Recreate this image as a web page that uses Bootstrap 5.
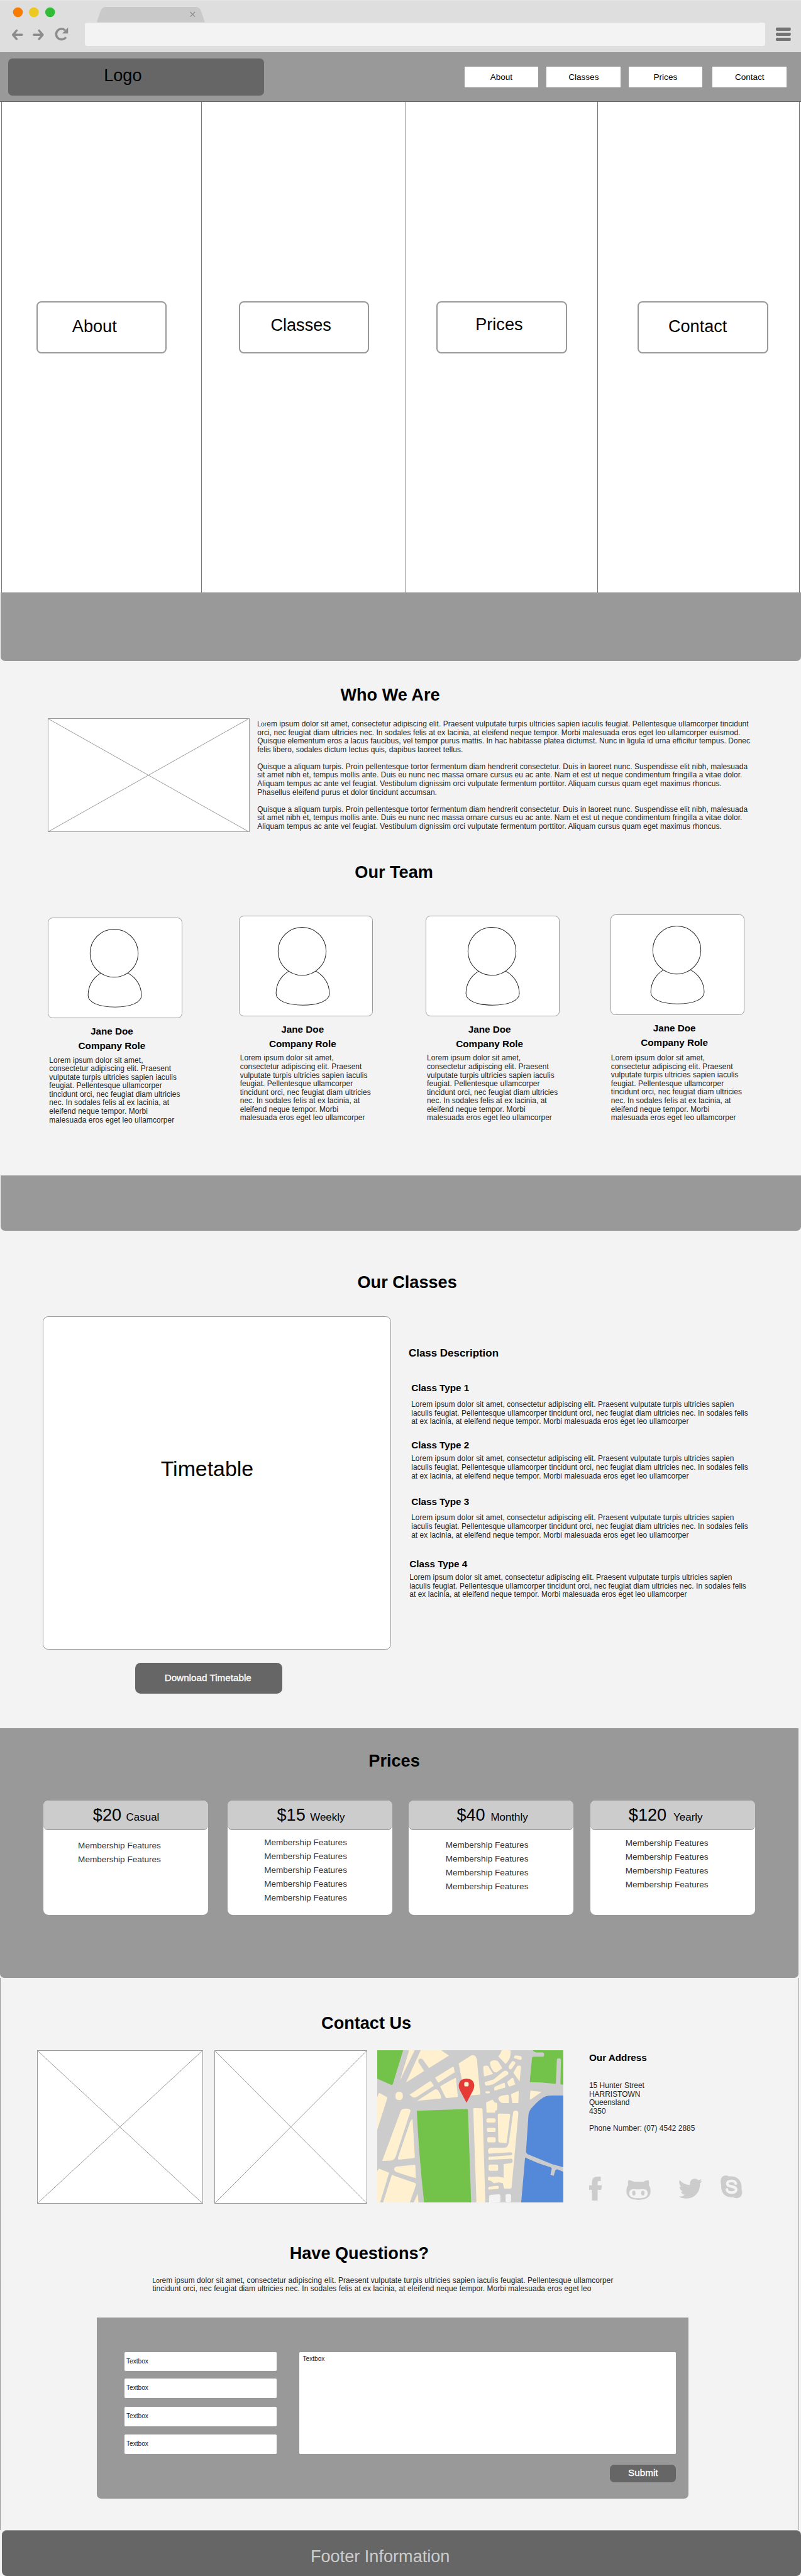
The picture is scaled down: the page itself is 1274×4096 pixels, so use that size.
<!DOCTYPE html>
<html lang="en">
<head>
<meta charset="utf-8">
<meta name="viewport" content="width=device-width, initial-scale=1">
<title>Fitness studio wireframe</title>
<link href="https://cdn.jsdelivr.net/npm/bootstrap@5.3.0/dist/css/bootstrap.min.css" rel="stylesheet">
<style>
/* 1rem = 10 design units */
html{font-size:8.473px}
body{font-family:"Liberation Sans",Arial,sans-serif;font-size:1.4rem;line-height:1.6rem;color:#222;background:#f3f3f3;overflow-x:hidden}
svg{display:block;flex:none}
.nw{white-space:nowrap}
.title{font-size:3.2rem;line-height:3.6rem;font-weight:700;color:#000;margin:0 0 -.13rem;padding-top:.13rem;white-space:nowrap}
.sub{font-size:1.8rem;line-height:2rem;font-weight:700;color:#000;margin:0;white-space:nowrap}
.lor{font-size:1.2rem}
.about-txt p,.bio,.ask{letter-spacing:.0125rem}
/* browser bar */
.chrome{height:9.8rem;background:#dedede;border-top:1px solid #e6e6e6}
.chrome-top{height:4.1rem}
.dots{margin:1.2rem 0 0 2.4rem}
.tabshape{margin:1.2rem 0 0 7.6rem;width:20.5rem;height:2.9rem}
.arrows{margin:.9rem 0 0 2.1rem;width:10.9rem}
.address{margin-left:2.9rem;width:127.7rem;height:4.4rem;background:#f3f3f3;border-radius:.4rem}
.burger{margin:.8rem 0 0 2.1rem}
/* navigation */
.mainnav{height:9.3rem;background:#999;border-bottom:1px solid #666;padding:1.2rem 2.7rem 0 1.5rem}
.logo{width:48.1rem;height:7rem;border-radius:.8rem;background:#666;font-size:3.2rem;line-height:3.6rem;color:#000;padding:1.45rem 0 0 18rem}
.menu{margin-top:1.5rem}
.menu a{width:13.9rem;height:3.9rem;background:#fff;border-bottom:1px solid #ddd;color:#000;font-size:1.6rem;line-height:4rem;text-align:center;text-decoration:none;padding:0}
.g1{margin-left:1.55rem}.g2{margin-left:1.45rem}.g3{margin-left:1.9rem}
/* hero */
.hero{height:92.1rem;background:#fff;padding-left:.2rem}
.panel{border-left:1px solid #777;padding-top:37.4rem;height:100%;flex:none}
.p1{width:37.6rem;padding-left:6.5rem}.p2{width:38.3rem;padding-left:6.9rem}.p3{width:36rem;padding-left:5.7rem}.p4{width:38rem;padding-left:7.5rem;border-right:1px solid #777}
.bigbtn{width:24.5rem;height:9.8rem;border:.3rem solid #999;border-radius:.9rem;background:#fff;color:#000;font-size:3.2rem;line-height:3.6rem}
.p1 .bigbtn{padding:2.7rem 0 0 6.5rem}.p2 .bigbtn{padding:2.5rem 0 0 5.75rem}.p3 .bigbtn{padding:2.4rem 0 0 7.1rem}.p4 .bigbtn{padding:2.7rem 0 0 5.5rem}
.band{background:#999;border-radius:0 0 .8rem .8rem;margin-left:.15rem}
.band-a{height:12.8rem}.band-b{height:10.4rem}
/* about */
.about{height:96.6rem;padding-top:4.46rem}
.t-who{padding-left:63.9rem}
.about-row{height:21.4rem;margin:2.74rem 0 0 9rem}
.ph{border:1px solid #999;background:#fff}
.ph svg{width:100%;height:100%}
.ph-a{width:37.8rem;height:21.4rem}
.about-txt{padding:.35rem 0 0 1.5rem}
.about-txt p{margin:0 0 1.6rem}
.t-team{padding-left:66.6rem;margin-top:5.66rem}
.team{margin-top:6.2rem}
.member{width:25.2rem;flex:none}
.m1{margin:.54rem 0 0 9rem}.m2{margin:.17rem 0 0 10.6rem}.m3{margin:.17rem 0 0 9.9rem}.m4{margin-left:9.5rem}
.avatar{height:18.88rem;border:1px solid #999;border-radius:.9rem;background:#fff;overflow:hidden}
.who{font-size:1.8rem;line-height:2.7rem;font-weight:700;color:#000;text-align:center;margin:1.16rem 1.2rem 0 0}
.bio{margin:.6rem 0 0 .25rem;white-space:nowrap}
.m4 .bio{margin:.74rem 0 0 .1rem}
/* classes */
.classes{height:93.3rem;padding-top:7.79rem}
.t-classes{padding-left:67.1rem}
.classes-row{margin:4.58rem 0 0 8.06rem}
.timetable{width:65.35rem;height:62.55rem;background:#fff;border:1px solid #999;border-radius:1rem;font-size:4rem;line-height:4.6rem;color:#000;padding:26.2rem 0 0 22rem}
.dark{background:#666;color:#fff;font-size:1.8rem;line-height:2rem;border:0;border-radius:1rem;padding:0;-webkit-text-stroke:.3px #fff}
.download{margin:2.5rem 0 0 17.35rem;width:27.55rem;height:5.8rem;padding-right:.3rem}
.desc{padding:5.86rem 0 0 3.3rem}
.desc h3{font-size:2rem;line-height:2.4rem;font-weight:700;color:#000;margin:0}
.desc p{margin:0;white-space:nowrap;letter-spacing:.01rem}
.c1,.c2,.c3{padding-left:.5rem}.c4{padding-left:.15rem}
.c1{margin-top:4.25rem}.c2{margin-top:2.69rem}.c3{margin-top:3rem}.c4{margin-top:3.66rem}
.c1 p{margin-top:1.36rem}.c2 p{margin-top:.71rem}.c3 p{margin-top:1.3rem}.c4 p{margin-top:.74rem}
/* prices */
.prices{height:46.9rem;width:149.85rem;background:#999;border-radius:0 0 .8rem .8rem;padding-top:4.29rem}
.t-prices{padding-left:69.2rem}
.plans{margin:5.7rem 0 0 8.15rem}
.plan{height:21.5rem;width:30.9rem;background:#fff;border-radius:1rem;flex:none}
.plan-head{height:5.57rem;background:#ccc;border-bottom:1px solid #888;border-radius:.9rem;color:#000;padding-top:.93rem;font-size:3.2rem;line-height:3.6rem;white-space:nowrap}
.plan-head span{font-size:2rem}
.feat{font-size:1.6rem;line-height:2.6rem;color:#333;margin:0}
.k1 .plan-head{padding-left:9.3rem}.k2 .plan-head{padding-left:9.3rem}.k3 .plan-head{padding-left:9rem}.k4 .plan-head{padding-left:7.2rem}
.k1 .feat{padding:1.6rem 0 0 6.5rem}.k2 .feat{padding:1rem 0 0 6.9rem}.k3 .feat{padding:1.5rem 0 0 6.9rem}.k4 .feat{padding:1.2rem 0 0 6.6rem}
.k2{margin-left:3.64rem}.k3{margin-left:3.15rem}.k4{margin-left:3.17rem}
.k3 .plan-head span{margin-left:.15rem}.k4 .plan-head span{margin-left:.4rem}
/* contact */
.contact{height:103.6rem;width:150rem;border:solid #999;border-width:0 1px;padding-top:6.56rem}
.t-contact{padding-left:60.2rem}
.contact-row{height:28.8rem;margin:3.44rem 0 0 6.9rem}
.ph-b{width:31.1rem;height:28.8rem}.ph-c{width:28.7rem;height:28.8rem;margin-left:2.1rem}
.map{width:34.92rem;height:28.57rem;margin-left:1.95rem}
.addr{padding:.4rem 0 0 4.8rem}
.addr p{margin:3.47rem 0 0;white-space:nowrap;letter-spacing:.007rem}
.social{margin-top:8rem}
.i-fb{width:2.4rem;height:4.55rem;margin-top:.2rem}.i-gh{width:4.6rem;height:3.8rem;margin:.8rem 0 0 4.6rem}.i-tw{width:4.5rem;height:3.8rem;margin:.6rem 0 0 5.2rem}.i-sk{width:4.1rem;height:4.3rem;margin-left:3.4rem}
.t-ask{padding-left:54.25rem;margin-top:7.37rem}
.ask{margin:2.64rem 0 0 28.5rem;white-space:nowrap}
.askform{margin:4.49rem 0 0 18rem;width:111.1rem;height:34rem;background:#999;border-radius:0 0 .8rem .8rem;padding:6.5rem 2.3rem 0 5.3rem}
.tb{width:28.5rem;height:3.6rem;border:0;border-radius:.2rem;background:#fff;font-size:1.2rem;line-height:3.6rem;color:#222;padding:0 0 0 .3rem}
.tb2{margin-top:1.4rem}.tb3{margin-top:1.7rem}.tb4{margin-top:1.6rem}
.ta{width:70.7rem;height:19.1rem;line-height:1.4rem;padding:.58rem 0 0 .6rem}
.submit{width:12.4rem;height:3.4rem;margin-top:2rem;padding-bottom:.2rem;border-radius:.8rem}
/* footer */
.foot{height:8.6rem;margin-left:.3rem;background:#666;border-top:1px solid #999;border-radius:.9rem;color:#ccc;font-size:3.2rem;line-height:3.6rem;padding:3.1rem 0 0 58rem}
</style>
<script src="https://cdn.jsdelivr.net/npm/bootstrap@5.3.0/dist/js/bootstrap.bundle.min.js"></script>
</head>
<body>
<svg width="0" height="0" class="position-absolute">
  <symbol id="person" viewBox="0 0 252 189">
    <g fill="#fff" stroke="#222" stroke-width="1.2">
      <path d="M99 104.5C83 114 75 130 75 147C75 160 95 169 126 169C157 169 176.500 160 176.500 147C176.500 130 168 114 151 104.500Z"/>
      <circle cx="124.500" cy="66.500" r="45.700"/>
    </g>
  </symbol>
  <symbol id="cross" viewBox="0 0 100 100" preserveAspectRatio="none">
    <path d="M0 0L100 100M100 0L0 100" stroke="#999" fill="none" vector-effect="non-scaling-stroke"/>
  </symbol>
</svg>

<header>
  <div class="chrome">
    <div class="chrome-top d-flex">
      <svg class="dots" style="width:8.1rem;height:2rem" viewBox="0 0 81 20"><circle cx="10" cy="10" r="9.200" fill="#f97c00"/><circle cx="40" cy="10" r="9.200" fill="#ecc822"/><circle cx="70.500" cy="10" r="9.200" fill="#33bc38"/></svg>
      <svg class="tabshape" viewBox="0 0 205 29"><path d="M1 29L8 8Q11 0 18 0H187Q194 0 197 8L204 29Z" fill="#c9c9c9"/><path d="M176.500 9.500L185.500 18.500M185.500 9.500L176.500 18.500" stroke="#8c8c8c" stroke-width="1.500"/></svg>
    </div>
    <div class="d-flex">
      <svg class="arrows" style="height:2.700rem" viewBox="0 0 109 27"><g fill="none" stroke="#8c8c8c" stroke-width="4" stroke-linecap="round" stroke-linejoin="round"><path d="M20 14.500H3M10 6.500L3 14.500L10 22.500M42 14.500H59M52 6.500L59 14.500L52 22.500"/><path d="M102.500 19A10 10 0 1 1 101 6" stroke-linecap="butt"/></g><path d="M106.500 1V12H95.500Z" fill="#8c8c8c"/></svg>
      <div class="address"></div>
      <svg class="burger" style="width:2.800rem;height:2.700rem" viewBox="0 0 28 27"><g fill="#737373"><rect y="1" width="28" height="6" rx="2"/><rect y="10.500" width="28" height="6" rx="2"/><rect y="20" width="28" height="6" rx="2"/></g></svg>
    </div>
  </div>
  <nav class="mainnav d-flex justify-content-between align-items-start">
    <div class="logo">Logo</div>
    <div class="menu d-flex"><a class="nav-link" href="#">About</a><a class="nav-link g1" href="#">Classes</a><a class="nav-link g2" href="#">Prices</a><a class="nav-link g3" href="#">Contact</a></div>
  </nav>
</header>

<section class="hero d-flex">
  <div class="panel p1"><div class="bigbtn">About</div></div>
  <div class="panel p2"><div class="bigbtn">Classes</div></div>
  <div class="panel p3"><div class="bigbtn">Prices</div></div>
  <div class="panel p4"><div class="bigbtn">Contact</div></div>
</section>
<div class="band band-a"></div>

<section class="about">
  <h2 class="title t-who">Who We Are</h2>
  <div class="about-row d-flex">
    <div class="ph ph-a"><svg><use href="#cross"/></svg></div>
    <div class="about-txt nw">
      <p><span class="lor">Lor</span>em ipsum dolor sit amet, consectetur adipiscing elit. Praesent vulputate turpis ultricies sapien iaculis feugiat. Pellentesque ullamcorper tincidunt<br>orci, nec feugiat diam ultricies nec. In sodales felis at ex lacinia, at eleifend neque tempor. Morbi malesuada eros eget leo ullamcorper euismod.<br>Quisque elementum eros a lacus faucibus, vel tempor purus mattis. In hac habitasse platea dictumst. Nunc in ligula id urna efficitur tempus. Donec<br>felis libero, sodales dictum lectus quis, dapibus laoreet tellus.</p>
      <p>Quisque a aliquam turpis. Proin pellentesque tortor fermentum diam hendrerit consectetur. Duis in laoreet nunc. Suspendisse elit nibh, malesuada<br>sit amet nibh et, tempus mollis ante. Duis eu nunc nec massa ornare cursus eu ac ante. Nam et est ut neque condimentum fringilla a vitae dolor.<br>Aliquam tempus ac ante vel feugiat. Vestibulum dignissim orci vulputate fermentum porttitor. Aliquam cursus quam eget maximus rhoncus.<br>Phasellus eleifend purus et dolor tincidunt accumsan.</p>
      <p>Quisque a aliquam turpis. Proin pellentesque tortor fermentum diam hendrerit consectetur. Duis in laoreet nunc. Suspendisse elit nibh, malesuada<br>sit amet nibh et, tempus mollis ante. Duis eu nunc nec massa ornare cursus eu ac ante. Nam et est ut neque condimentum fringilla a vitae dolor.<br>Aliquam tempus ac ante vel feugiat. Vestibulum dignissim orci vulputate fermentum porttitor. Aliquam cursus quam eget maximus rhoncus.</p>
    </div>
  </div>
  <h2 class="title t-team">Our Team</h2>
  <div class="team d-flex align-items-start">
    <div class="member m1">
      <div class="avatar"><svg class="w-100 h-100"><use href="#person"/></svg></div>
      <div class="who">Jane Doe<br>Company Role</div>
      <p class="bio">Lorem ipsum dolor sit amet,<br>consectetur adipiscing elit. Praesent<br>vulputate turpis ultricies sapien iaculis<br>feugiat. Pellentesque ullamcorper<br>tincidunt orci, nec feugiat diam ultricies<br>nec. In sodales felis at ex lacinia, at<br>eleifend neque tempor. Morbi<br>malesuada eros eget leo ullamcorper</p>
    </div>
    <div class="member m2">
      <div class="avatar"><svg class="w-100 h-100" viewBox="6 0 252 189"><use href="#person" width="252" height="189"/></svg></div>
      <div class="who">Jane Doe<br>Company Role</div>
      <p class="bio">Lorem ipsum dolor sit amet,<br>consectetur adipiscing elit. Praesent<br>vulputate turpis ultricies sapien iaculis<br>feugiat. Pellentesque ullamcorper<br>tincidunt orci, nec feugiat diam ultricies<br>nec. In sodales felis at ex lacinia, at<br>eleifend neque tempor. Morbi<br>malesuada eros eget leo ullamcorper</p>
    </div>
    <div class="member m3">
      <div class="avatar"><svg class="w-100 h-100"><use href="#person"/></svg></div>
      <div class="who">Jane Doe<br>Company Role</div>
      <p class="bio">Lorem ipsum dolor sit amet,<br>consectetur adipiscing elit. Praesent<br>vulputate turpis ultricies sapien iaculis<br>feugiat. Pellentesque ullamcorper<br>tincidunt orci, nec feugiat diam ultricies<br>nec. In sodales felis at ex lacinia, at<br>eleifend neque tempor. Morbi<br>malesuada eros eget leo ullamcorper</p>
    </div>
    <div class="member m4">
      <div class="avatar"><svg class="w-100 h-100"><use href="#person"/></svg></div>
      <div class="who">Jane Doe<br>Company Role</div>
      <p class="bio">Lorem ipsum dolor sit amet,<br>consectetur adipiscing elit. Praesent<br>vulputate turpis ultricies sapien iaculis<br>feugiat. Pellentesque ullamcorper<br>tincidunt orci, nec feugiat diam ultricies<br>nec. In sodales felis at ex lacinia, at<br>eleifend neque tempor. Morbi<br>malesuada eros eget leo ullamcorper</p>
    </div>
  </div>
</section>
<div class="band band-b"></div>

<section class="classes">
  <h2 class="title t-classes">Our Classes</h2>
  <div class="classes-row d-flex align-items-start">
    <div>
      <div class="timetable">Timetable</div>
      <button class="dark download d-block">Download Timetable</button>
    </div>
    <div class="desc">
      <h3>Class Description</h3>
      <div class="c1"><h4 class="sub">Class Type 1</h4><p>Lorem ipsum dolor sit amet, consectetur adipiscing elit. Praesent vulputate turpis ultricies sapien<br>iaculis feugiat. Pellentesque ullamcorper tincidunt orci, nec feugiat diam ultricies nec. In sodales felis<br>at ex lacinia, at eleifend neque tempor. Morbi malesuada eros eget leo ullamcorper</p></div>
      <div class="c2"><h4 class="sub">Class Type 2</h4><p>Lorem ipsum dolor sit amet, consectetur adipiscing elit. Praesent vulputate turpis ultricies sapien<br>iaculis feugiat. Pellentesque ullamcorper tincidunt orci, nec feugiat diam ultricies nec. In sodales felis<br>at ex lacinia, at eleifend neque tempor. Morbi malesuada eros eget leo ullamcorper</p></div>
      <div class="c3"><h4 class="sub">Class Type 3</h4><p>Lorem ipsum dolor sit amet, consectetur adipiscing elit. Praesent vulputate turpis ultricies sapien<br>iaculis feugiat. Pellentesque ullamcorper tincidunt orci, nec feugiat diam ultricies nec. In sodales felis<br>at ex lacinia, at eleifend neque tempor. Morbi malesuada eros eget leo ullamcorper</p></div>
      <div class="c4"><h4 class="sub">Class Type 4</h4><p>Lorem ipsum dolor sit amet, consectetur adipiscing elit. Praesent vulputate turpis ultricies sapien<br>iaculis feugiat. Pellentesque ullamcorper tincidunt orci, nec feugiat diam ultricies nec. In sodales felis<br>at ex lacinia, at eleifend neque tempor. Morbi malesuada eros eget leo ullamcorper</p></div>
    </div>
  </div>
</section>

<section class="prices">
  <h2 class="title t-prices">Prices</h2>
  <div class="plans d-flex">
    <div class="plan k1"><div class="plan-head">$20 <span>Casual</span></div><ul class="feat list-unstyled"><li>Membership Features</li><li>Membership Features</li></ul></div>
    <div class="plan k2"><div class="plan-head">$15 <span>Weekly</span></div><ul class="feat list-unstyled"><li>Membership Features</li><li>Membership Features</li><li>Membership Features</li><li>Membership Features</li><li>Membership Features</li></ul></div>
    <div class="plan k3"><div class="plan-head">$40 <span>Monthly</span></div><ul class="feat list-unstyled"><li>Membership Features</li><li>Membership Features</li><li>Membership Features</li><li>Membership Features</li></ul></div>
    <div class="plan k4"><div class="plan-head">$120 <span>Yearly</span></div><ul class="feat list-unstyled"><li>Membership Features</li><li>Membership Features</li><li>Membership Features</li><li>Membership Features</li></ul></div>
  </div>
</section>

<section class="contact">
  <h2 class="title t-contact">Contact Us</h2>
  <div class="contact-row d-flex align-items-start">
    <div class="ph ph-b"><svg><use href="#cross"/></svg></div>
    <div class="ph ph-c"><svg><use href="#cross"/></svg></div>
    <svg class="map" viewBox="56 54 1048 858" preserveAspectRatio="none">
      <rect x="56" y="54" width="1048" height="858" fill="#ccc"/>
      <g fill="#73c24a">
        <path d="M56 54H202L144 244Q141 252 134 249L56 214Z"/>
        <path d="M279 395L560 385Q567 385 567 392L585 912H320Q290 640 279 395Z"/>
        <path d="M932 54H1104V249L1088 245L1091 108Q1090 99 1079 99Q1068 99 1068 108L1062 244L980 236L915 234L928 97Q929 90 940 90H990Q996 90 996 78Q996 66 988 66H950Q938 64 932 54Z"/>
      </g>
      <g fill="#5389d8">
        <path d="M1104 309V713L1040 696L903 640Q893 634 894 625L908 420Q910 395 930 375Q975 325 1005 314Q1020 309 1050 309Z"/>
        <path d="M889 658L960 689L1034 714Q1041 718 1038 726L1032 756L1050 762L1059 732Q1062 724 1072 726L1104 739V912H867Z"/>
      </g>
      <g fill="#fff1cf">
        <path d="M236 54H267L184 224Z"/>
        <path d="M301 54H416L460 84L348 154L314 108Q304 97 293 104Q284 112 289 122L320 171L218 236Z"/>
        <path d="M64 297Q67 294 72 297L114 320L56 502V320Z"/>
        <rect x="159" y="289" width="41" height="46" rx="17"/>
        <path d="M238 305L350 230Q356 227 360 231L375 254L280 316Q262 326 252 316Z"/>
        <path d="M280 339L378 276Q390 270 398 279Q413 298 417 323Q417 326 412 326Z"/>
        <path d="M382 209L478 149Q487 145 488 152L492 178L400 237Z"/>
        <path d="M411 260Q412 254 495 211Q500 208 500 214L510 314Q510 318 504 318L448 323Q443 323 439 316Z"/>
        <path d="M515 128L586 83Q608 75 617 103Q620 115 620 135L636 304L550 311Z"/>
        <path d="M653 146Q664 139 677 142Q684 145 687 153L708 188L658 202Q656 190 653 146Z"/>
        <path d="M691 124Q697 111 716 111Q733 110 740 122L761 155L729 178Q717 181 711 173Q692 148 691 124Z"/>
        <path d="M757 54H807V78Q803 110 779 131L738 89Q752 75 757 54Z"/>
        <path d="M826 92Q829 80 844 84L862 87Q870 88 870 98Q870 109 860 108L826 98Z"/>
        <path d="M798 142L813 120Q819 112 827 117Q837 121 833 130L814 158Q809 164 802 160Q794 156 798 142Z"/>
        <path d="M823 181L843 145Q847 139 860 141Q867 142 866 151L858 230Z"/>
        <path d="M662 234L713 218L763 175Q772 168 783 170Q798 176 794 190L714 243Q695 253 668 253Q662 250 662 234Z"/>
        <path d="M715 266Q715 261 723 258L768 238Q775 236 775 243L778 264L720 281Q714 283 715 266Z"/>
        <path d="M788 233L815 210Q821 207 823 214L834 247L804 258Q798 260 794 252Z"/>
        <rect x="666" y="285" width="24" height="12" rx="5"/>
        <path d="M738 326Q740 315 760 309L790 305Q796 305 797 311L798 352H765Q745 350 738 326Z"/>
        <path d="M809 302L848 284Q853 282 853 288L851 352H817Z"/>
        <path d="M919 282L982 289L921 331Q914 335 916 320Z"/>
        <path d="M669 348L703 333Q709 333 717 348Q726 349 731 352Q735 370 731 391L720 396V406L672 406Z"/>
        <path d="M597 385Q597 380 605 380L642 381Q649 381 649 386L665 912H615Z"/>
        <path d="M200 385Q220 380 238 386Q246 391 242 402L160 653Q155 672 132 676L84 678L188 397Q192 388 200 385Z"/>
        <path d="M173 659L240 461Q250 440 255 443L268 656Q268 661 262 662L179 671Q172 670 173 659Z"/>
        <path d="M151 724Q153 712 166 710L266 700Q271 700 271 706L273 774Q190 752 160 738Q150 733 151 724Z"/>
        <path d="M66 721L123 744L72 912H56V735Z"/>
        <path d="M139 754L152 762L268 802Q274 804 274 813L240 912H89Z"/>
        <path d="M284 862L288 912H261Z"/>
        <rect x="671" y="438" width="52" height="24" rx="8"/><rect x="674" y="492" width="49" height="23" rx="7"/><rect x="676" y="544" width="47" height="29" rx="8"/>
        <path d="M735 418Q736 411 744 411L799 412Q806 413 805 420L785 575Q784 579 776 578L746 574Q738 573 738 565Z"/>
        <path d="M822 403Q823 394 838 394Q852 396 851 411L813 828Q812 834 804 834H776Q768 834 768 824L764 804L740 798L713 804L697 790L680 786V768Q684 764 697 767L735 766L768 773V696L810 690Q820 686 819 676Q817 664 806 665L684 672Q680 660 684 655L808 646Q818 645 817 636Q816 629 806 629L684 637Q678 625 680 617Q684 605 696 603H775Q793 600 797 575Q808 500 822 403Z"/>
        <rect x="683" y="698" width="54" height="36" rx="8"/><path d="M681 829Q682 823 690 823L733 818Q741 818 741 826Q741 835 735 836L688 839Q680 839 681 829Z"/>
      </g>
      <g fill="#f3f3f3"><path d="M686 880Q687 869 697 869L740 866Q750 867 750 876V905Q750 910 742 910L686 912Z"/><rect x="779" y="865" width="31" height="45" rx="8"/></g>
      <path d="M559 350L522 280Q515 268 515 253Q518 214 559 214Q600 214 603 253Q602 268 596 280Z" fill="#e53a35"/>
      <rect x="546" y="233" width="25" height="25" rx="9" fill="#fff1cf"/>
    </svg>
    <div class="addr">
      <h4 class="sub">Our Address</h4>
      <p>15 Hunter Street<br>HARRISTOWN<br>Queensland<br>4350<br><br>Phone Number: (07) 4542 2885</p>
      <div class="social d-flex align-items-start">
        <svg class="i-fb" viewBox="72 74 72 137" fill="#ccc"><path d="M88 211V149H72V123H88V105Q88 75 118 74H138V99H126Q120 99 120 106V123H144L140 149H120V211Z"/></svg>
        <svg class="i-gh" viewBox="284 91 138 114" fill="#ccc" fill-rule="evenodd"><path d="M297 93Q309 92 327 102H380Q395 93 409 93Q415 108 411 121Q421 132 421 155Q421 204 353 204Q285 204 285 155Q285 133 295 121Q292 105 297 93ZM327 143Q301 143 301 168Q301 195 353 195Q405 195 405 168Q405 143 378 143Q365 145 353 145Q340 145 327 143Z"/><rect x="318" y="152" width="18" height="27" rx="9"/><rect x="369" y="152" width="18" height="27" rx="9"/></svg>
        <svg class="i-tw" viewBox="580 86 135 113" fill="#ccc"><path d="M581 187Q603 189 616 177Q599 175 595 159Q600 160 605 158Q586 150 586 131Q591 134 596 133Q579 117 587 94Q610 121 646 122Q641 98 660 89Q679 82 693 95Q702 93 710 89Q708 97 702 102Q709 102 714 99Q710 106 702 112Q703 149 681 174Q660 198 626 198Q602 199 581 187Z"/></svg>
        <svg class="i-sk" viewBox="820 68 123 129"><path d="M824 122C815 95 824 70 848 69Q860 68 868 74C915 68 944 100 938 145C948 170 938 196 912 196Q900 197 892 191C850 196 820 168 824 122Z" fill="#ccc"/><path d="M906 114C904 94 858 94 858 115C858 136 908 125 908 148C908 172 857 170 856 147" fill="none" stroke="#f3f3f3" stroke-width="15" stroke-linecap="round"/></svg>
      </div>
    </div>
  </div>
  <h2 class="title t-ask">Have Questions?</h2>
  <p class="ask"><span class="lor">Lor</span>em ipsum dolor sit amet, consectetur adipiscing elit. Praesent vulputate turpis ultricies sapien iaculis feugiat. Pellentesque ullamcorper<br>tincidunt orci, nec feugiat diam ultricies nec. In sodales felis at ex lacinia, at eleifend neque tempor. Morbi malesuada eros eget leo</p>
  <div class="askform">
    <div class="d-flex justify-content-between align-items-start">
      <div><div class="tb">Textbox</div><div class="tb tb2">Textbox</div><div class="tb tb3">Textbox</div><div class="tb tb4">Textbox</div></div>
      <div class="tb ta">Textbox</div>
    </div>
    <button class="dark submit d-block ms-auto">Submit</button>
  </div>
</section>
<footer class="foot">Footer Information</footer>
</body>
</html>
